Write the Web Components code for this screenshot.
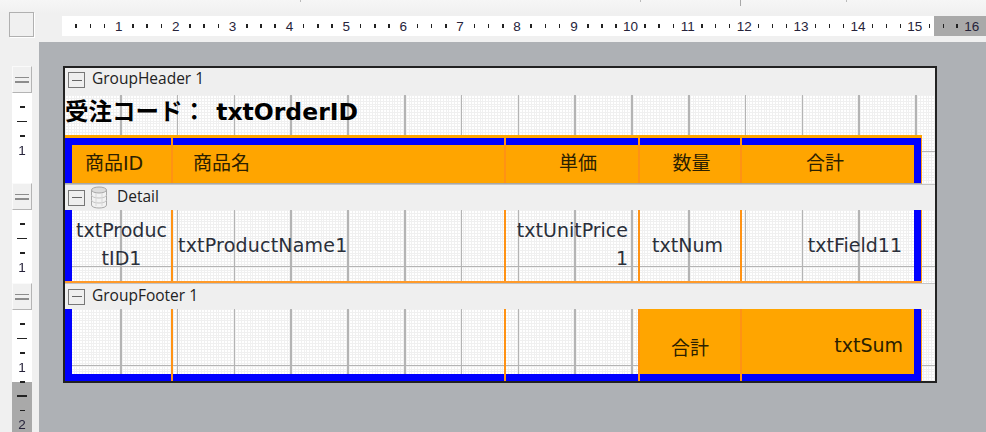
<!DOCTYPE html>
<html>
<head>
<meta charset="utf-8">
<style>
  html, body { margin: 0; height: 100%; }
  body { width: 986px; height: 432px; overflow: hidden; background: #f0f0f0; }
</style>
</head>
<body>
<report-designer>
  <report-band slot="bands" label="GroupHeader 1">
    <report-title>受注コード： txtOrderID</report-title>
    <report-row kind="header">
      <report-cell pad="0 0 2px 13px">商品ID</report-cell>
      <report-cell pad="0 0 2px 20px">商品名</report-cell>
      <report-cell align="right" pad="0 41px 2px 0">単価</report-cell>
      <report-cell align="center" pad="0 0 2px 3px">数量</report-cell>
      <report-cell align="center" pad="0 6px 2px 0" last>合計</report-cell>
    </report-row>
  </report-band>
  <report-band slot="bands" label="Detail" db>
    <report-row kind="detail">
      <report-cell align="center" wrap pad="0 2px 3px">txtProductID1</report-cell>
      <report-cell pad="0 0 2px 5px" spaced>txtProductName1</report-cell>
      <report-cell align="right" wrap pad="0 10px 3px 5px">txtUnitPrice1</report-cell>
      <report-cell align="center" pad="0 5px 2px 0">txtNum</report-cell>
      <report-cell align="right" pad="0 12px 2px 0" last>txtField11</report-cell>
    </report-row>
  </report-band>
  <report-band slot="bands" label="GroupFooter 1">
    <report-row kind="footer">
      <report-cell></report-cell>
      <report-cell></report-cell>
      <report-cell></report-cell>
      <report-cell align="center" pad="12px 0 0 0" fill>合計</report-cell>
      <report-cell align="right" pad="6px 11px 0 0" fill last>txtSum</report-cell>
    </report-row>
  </report-band>
</report-designer>

<script>
const FONT = "'DejaVu Sans', 'Noto Sans CJK JP', sans-serif";
const RULER_FONT = "13.5px 'Liberation Sans', sans-serif";

class HRuler extends HTMLElement {
  connectedCallback() {
    let units = '';
    for (let n = 1; n <= 16; n++) {
      units += `<div class="unit"><i></i><i></i><i></i><b>${n}</b></div>`;
    }
    this.attachShadow({ mode: 'open' }).innerHTML = `
      <style>
        :host { display: flex; flex: 1; height: 20px; margin-top: 4px; padding-left: 7px; overflow: hidden;
                background: linear-gradient(90deg, #fff 872px, #a9a9a9 872px); font: ${RULER_FONT}; color: #26233a; }
        .unit { flex: 0 0 56.9px; display: grid; grid-template-columns: repeat(4, 1fr); align-items: center; justify-items: center; }
        i { width: 1.5px; height: 4px; background: #222; }
        b { font-weight: normal; white-space: nowrap; }
      </style>${units}`;
  }
}
customElements.define('h-ruler', HRuler);

class VRuler extends HTMLElement {
  connectedCallback() {
    const count = Number(this.getAttribute('count') || 1);
    let units = '';
    for (let n = 1; n <= count; n++) {
      units += `<div class="unit"><i></i><i class="long"></i><i></i><b>${n}</b></div>`;
    }
    this.attachShadow({ mode: 'open' }).innerHTML = `
      <style>
        :host { display: block; overflow: hidden; background: #fff; padding-top: 7px; box-sizing: border-box;
                font: ${RULER_FONT}; color: #26233a; }
        .unit { display: grid; grid-auto-rows: 14.4px; align-items: center; justify-items: center; }
        i { width: 5px; height: 1.5px; background: #222; }
        i.long { width: 10px; }
        b { font-weight: normal; line-height: 14px; margin-top: 1px; }
      </style>${units}`;
  }
}
customElements.define('v-ruler', VRuler);

class BandHandle extends HTMLElement {
  constructor() {
    super();
    this.attachShadow({ mode: 'open' }).innerHTML = `
      <style>
        :host { display: flex; height: 27px; flex-direction: column; align-items: center; justify-content: center; gap: 3px;
                background: #f0f0f0; box-sizing: border-box; border: 1px solid; border-color: #fafafa #b4b4b4 #b4b4b4 #fafafa; }
        i { width: 14px; height: 1.5px; background: #8c8c8c; }
      </style><i></i><i></i>`;
  }
}
customElements.define('band-handle', BandHandle);

const designerTemplate = document.createElement('template');
designerTemplate.innerHTML = `
  <style>
    :host { display: grid; grid-template-columns: 39px 1fr; grid-template-rows: 42px 1fr; width: 986px; height: 432px; filter: blur(0.35px); }
    .top { grid-column: 1 / 3; padding-top: 4px;
           background:
             linear-gradient(#a8a8a8, #a8a8a8) 740px 0 / 1px 6px no-repeat,
             linear-gradient(#bbb, #bbb) 300px 0 / 1px 2px no-repeat,
             linear-gradient(#bbb, #bbb) 640px 0 / 1px 2px no-repeat,
             linear-gradient(#bbb, #bbb) 846px 0 / 1px 2px no-repeat,
             linear-gradient(#f6f6f6, #f0f0f0 14px); }
    .strip { display: flex; align-items: flex-start; height: 33px; padding: 8px 0 0 9px; gap: 28px; box-sizing: border-box; }
    .corner { width: 25px; height: 25px; box-sizing: border-box; flex: none; border: 1px solid #b0b0b0; background: #f0f0f0; box-shadow: 1px 1px 0 #fff; }
    .left { padding: 24px 7px 0 12px; display: flex; flex-direction: column; }
    .last { flex: 1; background: linear-gradient(#fff 72px, #a9a9a9 72px); }
    .canvas { background: #aeb1b5; padding: 24px 0 0 24px; }
    .report { width: 874px; box-sizing: border-box; border: 2px solid #222; background: #efefef; }
  </style>
  <div class="top"><div class="strip"><div class="corner"></div><h-ruler></h-ruler></div></div>
  <div class="left">
    <band-handle></band-handle>
    <v-ruler style="height:90px"></v-ruler>
    <band-handle></band-handle>
    <v-ruler style="height:73px"></v-ruler>
    <band-handle></band-handle>
    <v-ruler class="last" count="2"></v-ruler>
  </div>
  <div class="canvas"><div class="report"><slot name="bands"></slot></div></div>`;

class ReportDesigner extends HTMLElement {
  constructor() {
    super();
    this.attachShadow({ mode: 'open' });
    this.shadowRoot.appendChild(designerTemplate.content.cloneNode(true));
  }
}
customElements.define('report-designer', ReportDesigner);

const bandTemplate = document.createElement('template');
bandTemplate.innerHTML = `
  <style>
    :host { display: block; }
    .head { display: flex; align-items: center; height: 26px; box-sizing: border-box; padding-left: 3px; gap: 7px;
            border-top: 1px solid #c4c4c4; font: 15.5px 'Open Sans', sans-serif; color: #222; background: #efefef; }
    :host(:first-of-type) .head { height: 27px; border-top: 0; padding-bottom: 3px; }
    .minus { width: 17px; height: 16px; box-sizing: border-box; border: 1.5px solid #777; display: flex; align-items: center; justify-content: center; flex: none; }
    .minus i { width: 10px; height: 1px; background: #666; }
    .label { margin-bottom: 4px; }
    svg { margin: 0 2px 0 -2px; flex: none; display: none; }
    :host([db]) svg { display: block; }
    .body {
      background-color: #fff;
      background-image:
        repeating-linear-gradient(90deg, transparent 0 55px, #b4b4b4 55px 56.5px, transparent 56.5px 56.8px),
        repeating-linear-gradient(180deg, transparent 0 56px, #b4b4b4 56px 57px),
        repeating-linear-gradient(90deg, #f0f0f0 0 1px, transparent 1px 2.84px),
        repeating-linear-gradient(180deg, #f0f0f0 0 1px, transparent 1px 2.84px);
    }
  </style>
  <div class="head">
    <span class="minus"><i></i></span>
    <svg width="18" height="23" viewBox="0 0 18 23">
      <path d="M1.5 4v15c0 4 15 4 15 0V4" fill="#f2f2f2" stroke="#a8a8a8"/>
      <ellipse cx="9" cy="4" rx="7.5" ry="3" fill="#dcdcdc" stroke="#a8a8a8"/>
      <path d="M1.5 9c0 4 15 4 15 0M1.5 14c0 4 15 4 15 0" fill="none" stroke="#c4c4c4"/>
      <path d="M6 7v13M12 7v13" fill="none" stroke="#d8d8d8"/>
    </svg>
    <span class="label"></span>
  </div>
  <div class="body"><slot></slot></div>`;

class ReportBand extends HTMLElement {
  constructor() {
    super();
    this.attachShadow({ mode: 'open' });
    this.shadowRoot.appendChild(bandTemplate.content.cloneNode(true));
    this.shadowRoot.querySelector('.label').textContent = this.getAttribute('label');
  }
}
customElements.define('report-band', ReportBand);

class ReportTitle extends HTMLElement {
  constructor() {
    super();
    this.attachShadow({ mode: 'open' }).innerHTML = `
      <style>
        :host { display: flex; height: 40px; align-items: center; padding-bottom: 10px; box-sizing: border-box;
                font: bold 23.5px ${FONT}; color: #000; white-space: pre; word-spacing: 2px; }
      </style><span><slot></slot></span>`;
  }
}
customElements.define('report-title', ReportTitle);

class ReportRow extends HTMLElement {
  constructor() {
    super();
    this.attachShadow({ mode: 'open' }).innerHTML = `
      <style>
        :host { display: block; width: 857px; box-sizing: border-box; border-right: 1px solid #ff9a1a; }
        :host([kind="header"]) { border-top: 3px solid #ffa500; border-bottom: 1px solid #a8a8a8; }
        :host([kind="detail"]) { border-bottom: 2px solid #ff9a2a; }
        .cols { display: grid; grid-template-columns: 101px 333px 134px 102px 172px;
                border: solid #0000ff; border-width: 0 7px; }
        :host([kind="header"]) .cols { height: 45px; }
        :host([kind="detail"]) .cols { height: 71px; }
        :host([kind="footer"]) .cols { height: 72px; }
      </style><div class="cols"><slot></slot></div>`;
  }
}
customElements.define('report-row', ReportRow);

class ReportCell extends HTMLElement {
  connectedCallback() {
    const kind = this.parentElement.getAttribute('kind');
    const align = this.getAttribute('align') || 'left';
    const pad = this.getAttribute('pad') || '0';
    const filled = kind === 'header' || this.hasAttribute('fill');
    const spacing = this.hasAttribute('spaced') ? '0.2px' : 'normal';
    this.attachShadow({ mode: 'open' }).innerHTML = `
      <style>
        :host { display: block; box-sizing: border-box; min-width: 0; font: 19px/28px ${FONT}; letter-spacing: ${spacing};
                color: ${filled ? '#2b2000' : '#2a2f3a'};
                border-right: ${this.hasAttribute('last') ? '0' : '2.5px solid #ff9214'}; }
        .in { box-sizing: border-box; height: 100%; display: flex; flex-direction: column; justify-content: center;
              padding: ${pad}; text-align: ${align}; background: ${filled ? '#ffa500' : 'transparent'}; ${this.hasAttribute('wrap') ? 'word-break: break-all;' : 'white-space: nowrap;'} }
        .top { border-top: 7px solid #0000ff; }
        .bottom { border-bottom: 7px solid #0000ff; }
      </style>
      <div class="in ${kind === 'header' ? 'top' : kind === 'footer' ? 'bottom' : ''}"><div><slot></slot></div></div>`;
  }
}
customElements.define('report-cell', ReportCell);
</script>
</body>
</html>
